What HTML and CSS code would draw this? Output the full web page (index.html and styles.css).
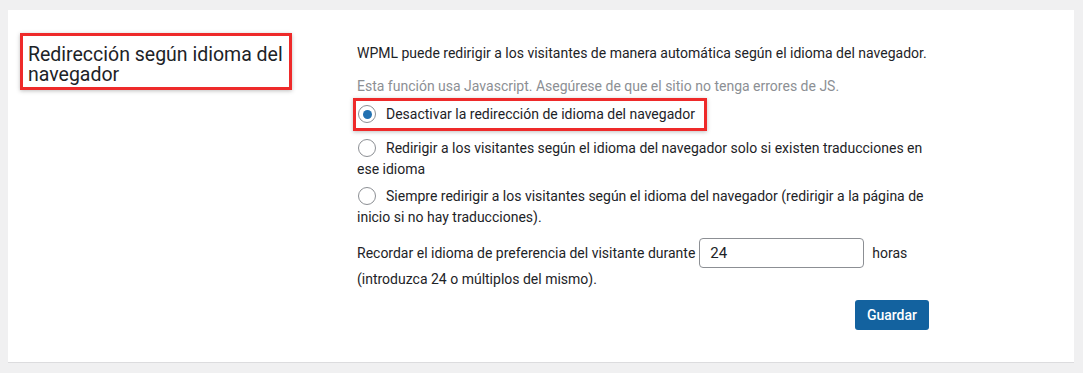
FILE: index.html
```html
<!DOCTYPE html>
<html lang="es">
<head>
<meta charset="UTF-8">
<meta name="viewport" content="width=device-width, initial-scale=1.0">
<title>Redirección según idioma del navegador</title>
<link rel="stylesheet" href="styles.css">
</head>
<body>
<div class="panel">
  <div class="settings-row">
    <div class="settings-label">
      <h3 class="highlight title-box">Redirección según idioma del navegador</h3>
    </div>
    <div class="settings-field">
      <p class="intro">WPML puede redirigir a los visitantes de manera automática según el idioma del navegador.</p>
      <p class="note">Esta función usa Javascript. Asegúrese de que el sitio no tenga errores de JS.</p>

      <div class="options">
        <label class="option highlight option-box"><span class="radio checked"></span><span>Desactivar la redirección de idioma del navegador</span></label>
        <label class="option"><span class="radio"></span>Redirigir a los visitantes según el idioma del navegador solo si existen traducciones en ese idioma</label>
        <label class="option"><span class="radio"></span>Siempre redirigir a los visitantes según el idioma del navegador (redirigir a la página de inicio si no hay traducciones).</label>
      </div>

      <div class="remember">
        <span>Recordar el idioma de preferencia del visitante durante</span>
        <input class="hours" type="text" value="24">
        <span>horas</span>
      </div>
      <p class="hint">(introduzca 24 o múltiplos del mismo).</p>

      <div class="actions">
        <button class="button-primary">Guardar</button>
      </div>
    </div>
  </div>
</div>
</body>
</html>
```

FILE: styles.css
```css
html, body {
  margin: 0;
  background-color: #f0f0f1;
  font-family: Roboto, "Liberation Sans", sans-serif;
  color: #1d2327;
}

.panel {
  margin: 10px 9px 0 8px;
  height: 353px;
  background-color: #fff;
  border-bottom: 1px solid #dcdcde;
  box-sizing: border-box;
}

.settings-row {
  display: grid;
  grid-template-columns: 349px 572px;
  padding-top: 23px;
}

.settings-label {
  padding-left: 12px;
}

/* red annotation boxes */
.highlight {
  border: 3px solid #ee2a2a;
  box-shadow: 0 1px 4px rgba(0, 0, 0, 0.25);
}

.title-box {
  width: 272px;
  height: 57px;
  box-sizing: border-box;
  margin: 0;
  padding: 9px 5px 0;
  font-size: 19.5px;
  font-weight: 400;
  line-height: 20px;
}

.settings-field {
  font-size: 14px;
  line-height: 21px;
}

.settings-field p {
  margin: 0;
}

.intro {
  padding-top: 10px;
}

.settings-field .note {
  margin-top: 12px;
  color: #8c8f94;
}

.options {
  margin-top: 1px;
}

.option {
  display: block;
}

.option .radio {
  float: left;
  width: 18px;
  height: 18px;
  margin: 1px 10px 0 1px;
  border: 1px solid #8c8f94;
  border-radius: 50%;
  box-sizing: border-box;
  position: relative;
}

.option .radio.checked::after {
  content: "";
  position: absolute;
  left: 3.5px;
  top: 3.5px;
  width: 9px;
  height: 9px;
  border-radius: 50%;
  background-color: #2271b1;
}

.option-box {
  display: inline-flex;
  margin-left: -4px;
  padding: 3px 9px 3px 1px;
}

.option-box .radio {
  float: none;
  flex: none;
}

.option + .option {
  margin-top: 7px;
}

.option + .option + .option {
  margin-top: 6px;
}

.remember {
  display: flex;
  align-items: center;
  margin-top: 10px;
}

.hours {
  width: 165px;
  height: 30px;
  box-sizing: border-box;
  margin: 0 8px 0 4px;
  padding: 0 10px;
  border: 1px solid #8c8f94;
  border-radius: 4px;
  font: inherit;
  font-size: 15px;
  color: #1d2327;
}

.settings-field .hint {
  margin-top: 1px;
}

.actions {
  display: flex;
  justify-content: flex-end;
  margin-top: 10px;
}

.button-primary {
  height: 30px;
  padding: 0 12px;
  border: none;
  border-radius: 3px;
  background-color: #13629f;
  color: #fff;
  font: inherit;
  font-size: 14px;
  font-weight: 500;
}
```
